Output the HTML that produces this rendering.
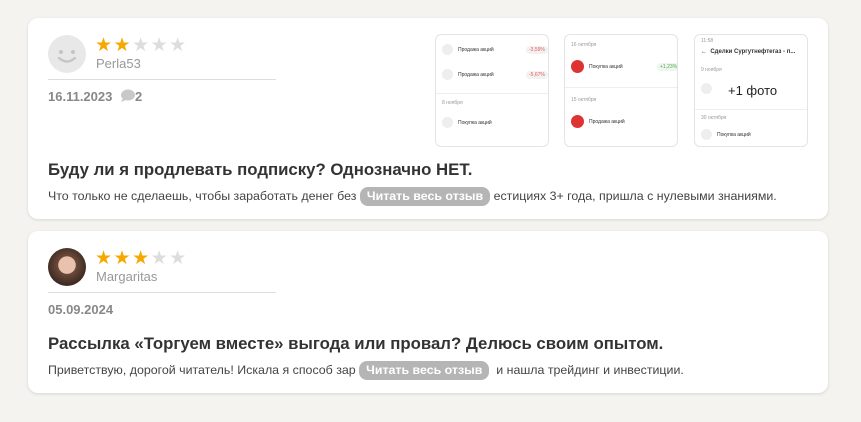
<!DOCTYPE html>
<html><head><meta charset="utf-8"><style>
*{margin:0;padding:0;box-sizing:border-box}
body{width:861px;height:422px;background:#f4f3ef;font-family:"Liberation Sans","DejaVu Sans",sans-serif;color:#333;position:relative;overflow:hidden}
.card{position:absolute;left:28px;width:800px;background:#fff;border-radius:10px;box-shadow:0 1px 3px rgba(0,0,0,.12)}
.av{position:absolute;left:20px;width:38px;height:38px;border-radius:50%;background:#e8e8e8;overflow:hidden}
.stars{position:absolute;left:67px;font-size:19px;letter-spacing:1.5px;line-height:19px}
.on{color:#f6a800}.off{color:#ddd}
.name{position:absolute;left:68px;font-size:13px;color:#999}
.line{position:absolute;left:20px;width:228px;height:1px;background:#ddd}
.date{position:absolute;left:20px;font-size:13px;font-weight:bold;color:#888}
.title{position:absolute;left:20px;font-size:16.8px;font-weight:bold;color:#333;white-space:nowrap}
.text{position:absolute;left:20px;font-size:12.4px;color:#444;white-space:nowrap}
.btn{display:inline-block;background:#b5b5b5;color:#fff;font-weight:bold;border-radius:8px;padding:1px 7px;font-size:12.4px;line-height:17px}
.ph{position:absolute;top:16px;width:114px;height:113px;border:1px solid #e4e4e4;border-radius:6px;background:#fff;overflow:hidden}
.row{position:absolute;left:6px;font-size:5px;color:#333}
.ic{display:inline-block;width:11px;height:11px;border-radius:50%;vertical-align:middle;margin-right:5px}
</style></head><body>
<div class="card" style="top:18px;height:201px">
 <div class="av" style="top:17px"><svg width="38" height="38"><circle cx="13" cy="17" r="2" fill="#c4c4c4"/><circle cx="25" cy="17" r="2" fill="#c4c4c4"/><path d="M11 23 Q19 30 27 23" stroke="#c4c4c4" stroke-width="2.2" fill="none" stroke-linecap="round"/></svg></div>
 <div class="stars" style="top:18px"><span class="on">★★</span><span class="off">★★★</span></div>
 <div class="name" style="top:38px">Perla53</div>
 <div class="line" style="top:61px"></div>
 <div class="date" style="top:71px">16.11.2023 <svg width="15" height="14" style="vertical-align:-2px;margin-left:4px"><ellipse cx="8" cy="6" rx="7" ry="5.5" fill="#c8c8c8"/><path d="M3 9 L1 13 L7 10.5Z" fill="#c8c8c8"/></svg><span style="color:#888">2</span></div>
 <div class="ph" style="left:407px">
  <div class="row" style="top:9px"><span class="ic" style="background:#eee"></span>Продажа акций <span style="position:absolute;left:84px;top:2px;background:#f2f2f2;color:#e55;border-radius:4px;padding:1px 3px">-3,59%</span></div>
  <div class="row" style="top:34px"><span class="ic" style="background:#eee"></span>Продажа акций <span style="position:absolute;left:84px;top:2px;background:#f2f2f2;color:#e55;border-radius:4px;padding:1px 3px">-5,67%</span></div>
  <div style="position:absolute;left:0;top:58px;width:114px;height:1px;background:#eee"></div>
  <div class="row" style="top:65px;color:#999">8 ноября</div>
  <div class="row" style="top:82px"><span class="ic" style="background:#eee"></span>Покупка акций</div>
 </div>
 <div class="ph" style="left:536px">
  <div class="row" style="top:7px;color:#999">16 октября</div>
  <div class="row" style="top:25px"><span class="ic" style="background:#d33;width:13px;height:13px"></span>Покупка акций <span style="position:absolute;left:86px;top:3px;background:#eef6ee;color:#5a5;border-radius:4px;padding:1px 3px">+1,23%</span></div>
  <div style="position:absolute;left:0;top:52px;width:114px;height:1px;background:#eee"></div>
  <div class="row" style="top:62px;color:#999">15 октября</div>
  <div class="row" style="top:80px"><span class="ic" style="background:#d33;width:13px;height:13px"></span>Продажа акций</div>
 </div>
 <div class="ph" style="left:666px">
  <div class="row" style="top:3px;color:#999">11:58</div>
  <div class="row" style="top:14px;font-size:6px;font-weight:bold">&larr;&nbsp; Сделки Сургутнефтегаз - п...</div>
  <div class="row" style="top:32px;color:#999">9 ноября</div>
  <div class="row" style="top:48px"><span class="ic" style="background:#eee"></span></div>
  <div style="position:absolute;left:33px;top:48px;font-size:13px;color:#222">+1 фото</div>
  <div style="position:absolute;left:0;top:74px;width:114px;height:1px;background:#eee"></div>
  <div class="row" style="top:80px;color:#999">30 октября</div>
  <div class="row" style="top:94px"><span class="ic" style="background:#eee"></span>Покупка акций</div>
 </div>
 <div class="title" style="top:142px">Буду ли я продлевать подписку? Однозначно НЕТ.</div>
 <div class="text" style="top:169px">Что только не сделаешь, чтобы заработать денег без <span class="btn">Читать весь отзыв</span> естициях 3+ года, пришла с нулевыми знаниями.</div>
</div>
<div class="card" style="top:231px;height:162px">
 <div class="av" style="top:17px;background:radial-gradient(circle at 50% 45%,#e9c2ad 0 30%,#6b4a3a 32%,#3d2a22 70%)"></div>
 <div class="stars" style="top:18px"><span class="on">★★★</span><span class="off">★★</span></div>
 <div class="name" style="top:38px">Margaritas</div>
 <div class="line" style="top:61px"></div>
 <div class="date" style="top:71px">05.09.2024</div>
 <div class="title" style="top:103px">Рассылка «Торгуем вместе» выгода или провал? Делюсь своим опытом.</div>
 <div class="text" style="top:130px">Приветствую, дорогой читатель! Искала я способ зар <span class="btn">Читать весь отзыв</span>&nbsp; и нашла трейдинг и инвестиции.</div>
</div>
</body></html>
